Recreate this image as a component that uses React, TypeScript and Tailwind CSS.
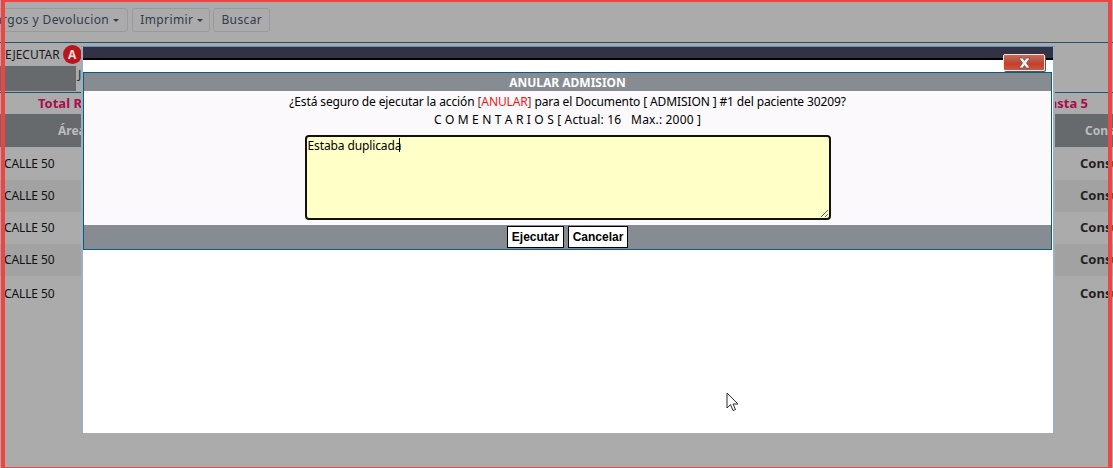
import React from 'react';

const rows = [
  { bg: 'bg-[#ababab]', h: 'h-[33px]' },
  { bg: 'bg-[#a2a2a2]', h: 'h-[32px]' },
  { bg: 'bg-[#ababab]', h: 'h-[32px]' },
  { bg: 'bg-[#a2a2a2]', h: 'h-[32px]' },
  { bg: 'bg-[#ababab]', h: 'h-[36px]' },
];

const ToolbarButton: React.FC<{ label: string; caret?: boolean; className?: string }> = ({ label, caret, className }) => (
  <button className={`h-6 shrink-0 rounded-[3px] border border-[#979a9e] flex items-center gap-1 text-[#2e3d52] tracking-[0.4px] text-[12px] ${className ?? ''}`}>
    {label}
    {caret && <span className="w-0 h-0 border-x-[3px] border-x-transparent border-t-[3px] border-t-[#2e3d52]" />}
  </button>
);

const App: React.FC = () => {
  return (
    <div className="relative w-[1113px] h-[468px] overflow-hidden bg-[#ababab] font-['Noto_Sans',sans-serif] text-[12px]">
      {/* page behind the overlay */}
      <div className="flex gap-[5px] pt-2 h-[43px] border-b border-[#1d5468] -ml-[22px] w-[1135px]">
        <ToolbarButton label="Cargos y Devolucion" caret className="pl-2 pr-2" />
        <ToolbarButton label="Imprimir" caret className="-ml-px pl-[7px] pr-[6px]" />
        <ToolbarButton label="Buscar" className="-ml-0.5 px-[7px]" />
      </div>
      <div className="h-[50px] border-b border-[#1d5468] relative">
        <div className="flex items-center h-[23px] pl-[5px] text-[#1a1a1a]">
          EJECUTAR
          <span className="ml-[3px] w-[19px] h-[19px] rounded-full bg-[#b9161c] text-[#e8dcdc] font-bold flex items-center justify-center">A</span>
        </div>
        <div className="flex">
          <div className="h-[25px] w-[76px] bg-[#666a6c]" />
          <span className="ml-[2px] leading-[18px] text-[#1a2a44]">J</span>
        </div>
      </div>
      <div className="h-[21px] flex items-center justify-between pl-[38px] pr-[25px] pt-px font-bold text-[13px] text-[#a80d4c]">
        <span>Total Registros</span>
        <span>hasta 5</span>
      </div>
      <div className="h-[33px] bg-[#666a6c] flex items-center justify-between pl-[58px] font-bold text-[#bdbdbd]">
        <span>Área</span>
        <span className="w-[28px] overflow-hidden">Consulta</span>
      </div>
      {rows.map((row, i) => (
        <div key={i} className={`${row.bg} ${row.h} flex items-center justify-between pl-1 text-[#111]`}>
          <span className="tracking-[-0.12px]">CALLE 50</span>
          <span className="font-bold text-[13px] w-[33px] overflow-hidden whitespace-nowrap text-[#222]">Consulta</span>
        </div>
      ))}

      {/* modal */}
      <div className="absolute left-[81px] top-[46px] w-[974px] h-[387px] bg-white border-x-2 border-[#9db0c0] border-t border-t-[#5f8fd6]">
        <div className="h-[11px] bg-[#333244]" />
        <div className="h-[2px] bg-black" />
        <div className="h-[12px] relative">
          <button className="absolute left-[920px] -top-[6px] w-[42px] h-[17px] rounded-[2px] border border-[#f3e3e0] bg-[linear-gradient(#c9695a_0%,#b9503e_45%,#d23a20_60%,#b5604f_100%)] shadow-[1px_1px_0_#555] flex items-center justify-center">
            <svg width="13" height="12" viewBox="0 0 13 11">
              <path d="M1 .5h3.700L6.500 3 8.300.5H12L8.500 5.500l3.500 5H8.300L6.500 8 4.700 10.500H1L4.500 5.500z" fill="#f1f1f4" stroke="#555" strokeWidth="0.7" />
            </svg>
          </button>
        </div>
        <div className="w-[969px] h-[178px] border border-[#0f5a78] flex flex-col bg-[#fbf9fb]">
          <div className="h-[18px] bg-[#868c92] text-white font-bold text-center leading-[19px] text-[12px]">ANULAR ADMISION</div>
          <div className="h-[134px] flex flex-col items-center text-black">
            <p className="mt-[2px] leading-[17px] whitespace-nowrap tracking-[-0.12px]">
              ¿Está seguro de ejecutar la acción <span className="text-[#7a3a20]">[</span><span className="text-[#f01818]">ANULAR</span><span className="text-[#7a3a20]">]</span> para el Documento [ ADMISION ] #1 del paciente 30209?
            </p>
            <p className="mt-[1px] leading-[18px] whitespace-pre tracking-[0.16px]">
              C O M E N T A R I O S [ Actual: 16   Max.: 2000 ]
            </p>
            <div className="relative mt-[6px] w-[526px] h-[85px]">
              <textarea
                defaultValue="Estaba duplicada"
                className="block w-full h-full rounded-[4px] border-2 border-[#111] bg-[#ffffc8] px-[1px] pt-px pb-0 text-[12px] leading-[16px] tracking-[-0.12px] text-black outline-none"
              />
              <span className="absolute left-[94px] top-[3px] w-px h-[14px] bg-black" />
            </div>
          </div>
          <div className="h-[24px] bg-[#868c92] flex justify-center items-center gap-1 font-['Liberation_Sans',sans-serif] font-bold text-[12px] text-black">
            <button className="h-[22px] w-[57px] bg-white border border-black">Ejecutar</button>
            <button className="h-[22px] w-[60px] bg-white border border-black">Cancelar</button>
          </div>
        </div>
      </div>

      {/* mouse pointer */}
      <svg className="absolute left-[726px] top-[392px]" width="13" height="20" viewBox="0 0 13 20">
        <path d="M1 1v15l3.500-3.500 2.500 6 2.500-1-2.500-5.500h5z" fill="#fff" stroke="#2a2a3a" strokeWidth="1" />
      </svg>

      {/* red frame of the screenshot */}
      <div className="absolute left-px top-0 w-[1111px] h-[468px] border-x-4 border-t-2 border-b border-[#ef4444] pointer-events-none" />
    </div>
  );
};

export default App;
